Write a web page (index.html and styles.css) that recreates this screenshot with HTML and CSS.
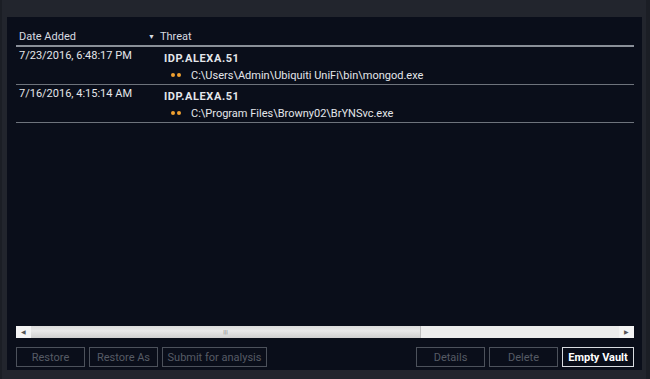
FILE: index.html
```html
<!DOCTYPE html>
<html lang="en">
<head>
    <meta charset="UTF-8">
    <title>Virus Chest</title>
    <link rel="stylesheet" href="styles.css">
</head>
<body>
    <div class="frame">
        <div class="panel">
            <div class="grid">
                <div class="grid-head">
                    <div class="col-date">Date Added</div>
                    <div class="col-threat"><span class="sort">&#9660;</span>Threat</div>
                </div>
                <div class="row">
                    <div class="col-date">7/23/2016, 6:48:17 PM</div>
                    <div class="col-threat">
                        <div class="name">IDP.ALEXA.51</div>
                        <div class="path"><span class="dots"><i></i><i></i></span>C:\Users\Admin\Ubiquiti UniFi\bin\mongod.exe</div>
                    </div>
                </div>
                <div class="row">
                    <div class="col-date">7/16/2016, 4:15:14 AM</div>
                    <div class="col-threat">
                        <div class="name">IDP.ALEXA.51</div>
                        <div class="path"><span class="dots"><i></i><i></i></span>C:\Program Files\Browny02\BrYNSvc.exe</div>
                    </div>
                </div>
            </div>

            <div class="scrollbar">
                <div class="arrow left">&#9664;</div>
                <div class="thumb"><span class="grip">|||</span></div>
                <div class="track"></div>
                <div class="arrow right">&#9654;</div>
            </div>

            <div class="actions">
                <button class="btn" disabled>Restore</button>
                <button class="btn" disabled>Restore As</button>
                <button class="btn wide" disabled>Submit for analysis</button>
                <div class="spacer"></div>
                <button class="btn" disabled>Details</button>
                <button class="btn" disabled>Delete</button>
                <button class="btn active">Empty Vault</button>
            </div>
        </div>
    </div>
</body>
</html>
```

FILE: styles.css
```css
html, body {
    margin: 0;
    padding: 0;
    background-color: #22252d;
}

body {
    font-family: Roboto, "Liberation Sans", sans-serif;
    font-size: 11px;
    color: #e4e6ea;
    width: 650px;
    height: 379px;
    overflow: hidden;
}

.frame {
    height: 379px;
    box-sizing: border-box;
    padding: 17px 4px 9px 5px;
    border-left: 2px solid #1b1e25;
    border-right: 4px solid #1b1e25;
}

.panel {
    background-color: #0a0e1a;
    height: 100%;
    box-sizing: border-box;
    padding: 13px 8px 3px 9px;
    display: flex;
    flex-direction: column;
}

.grid {
    flex: 1;
}

.grid-head {
    display: flex;
    height: 15px;
    line-height: 13px;
    border-bottom: 2px solid #8a8f98;
    color: #d8dbe0;
    padding-left: 3px;
}

.col-date {
    width: 129px;
}

.col-threat {
    flex: 1;
}

.sort {
    font-size: 7px;
    margin-right: 5px;
    position: relative;
    top: -1px;
}

.row {
    display: flex;
    padding-left: 3px;
    height: 37px;
    border-bottom: 1px solid #6e737c;
}

.row .col-date {
    padding-top: 2px;
    line-height: 13px;
}

.row .col-threat {
    padding-left: 16px;
}

.name {
    font-weight: bold;
    letter-spacing: 0.6px;
    padding-top: 5px;
    line-height: 13px;
}

.path {
    margin-top: 4px;
    padding-left: 7px;
    line-height: 13px;
}

.dots {
    display: inline-flex;
    gap: 2px;
    margin-right: 10px;
    vertical-align: 2px;
}

.dots i {
    width: 4px;
    height: 4px;
    border-radius: 50%;
    background-color: #f0a030;
}

.scrollbar {
    display: flex;
    height: 12px;
    margin: 0 0 9px 0;
    background-color: #ebebeb;
}

.arrow {
    width: 15px;
    font-size: 6px;
    line-height: 12px;
    text-align: center;
    color: #555;
    background-color: #f4f4f4;
}

.thumb {
    width: 389px;
    background: linear-gradient(#dcdcdc, #e8e8e8 40%, #cfcfcf);
    border-right: 1px solid #bdbdbd;
    text-align: center;
    font-size: 6px;
    line-height: 12px;
    color: #777;
}

.track {
    flex: 1;
    background-color: #ececec;
}

.actions {
    display: flex;
    gap: 4px;
    height: 20px;
}

.spacer {
    flex: 1;
}

.btn {
    font-family: inherit;
    font-size: 11px;
    width: 69px;
    height: 20px;
    padding: 0;
    background: transparent;
    border: 1px solid #4c515b;
    color: #565b65;
}

.btn.wide {
    width: 105px;
}

.btn.active {
    width: 72px;
    border-color: #d8dbe0;
    color: #ffffff;
    font-weight: bold;
}
```
